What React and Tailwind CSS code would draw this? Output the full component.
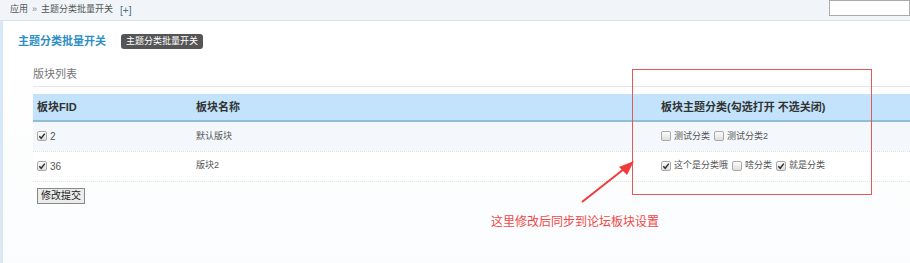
import React from "react";

const font = { fontFamily: '"Liberation Sans", "Noto Sans CJK SC", sans-serif' };

function Box({ checked }) {
  return (
    <span className="inline-flex items-center justify-center w-[10px] h-[10px] rounded-[2px] border border-[#aaa] bg-gradient-to-b from-[#fdfdfd] to-[#dedede] align-middle mr-[3px]">
      {checked && (
        <svg width="8" height="8" viewBox="0 0 8 8">
          <path d="M1.3 4.3 L3.2 6.3 L6.8 1.6" fill="none" stroke="#333" strokeWidth="1.5" />
        </svg>
      )}
    </span>
  );
}

const rows = [
  {
    fid: "2",
    name: "默认版块",
    cats: [
      ["测试分类", false],
      ["测试分类2", false],
    ],
  },
  {
    fid: "36",
    name: "版块2",
    cats: [
      ["这个是分类哦", true],
      ["啥分类", false],
      ["就是分类", true],
    ],
  },
];

export default function App() {
  return (
    <div className="relative w-[910px] h-[263px] overflow-hidden bg-white text-[#333]" style={font}>
      {/* Top nav */}
      <div className="h-[21px] flex items-center justify-between bg-[#f1f5f9] border-b border-[#dbe3ea] pl-[10px]">
        <div className="text-[9px] text-[#555] flex items-center">
          <span>应用</span>
          <span className="mx-[4px] text-[#888]">»</span>
          <span>主题分类批量开关</span>
          <span className="ml-[7px] text-[#4a6a8a] text-[10px]">[+]</span>
        </div>
        <div className="self-start w-[81px] h-[16px] border border-[#aaa] bg-white" />
      </div>

      {/* Body */}
      <div className="h-[242px] border-l-[3px] border-[#d8e8f4] bg-gradient-to-b from-white to-[#fbfcfd]">
        <div className="flex items-center pt-[13px] pl-[15px] h-[28px]">
          <span className="text-[11px] font-bold text-[#2d8fc6]">主题分类批量开关</span>
          <span className="ml-[15px] px-[5px] h-[15px] leading-[15px] rounded-[3px] bg-[#555] text-white text-[9px]">
            主题分类批量开关
          </span>
        </div>

        <div
          className="ml-[30px] mt-[18px] h-[20px] text-[11px] leading-[14px] text-[#777] border-b border-[#e6e6e6]"
          style={{ fontFamily: '"Liberation Serif", "Noto Sans CJK SC", serif' }}
        >
          版块列表
        </div>

        <table className="ml-[30px] mt-[7px] w-[877px] text-[9px] border-collapse">
          <thead>
            <tr className="bg-[#c2e3fb] border-b-2 border-[#93bcd8] h-[27px]">
              <th className="text-left text-[11px] font-bold pl-[4px] w-[163px] text-[#333]">板块FID</th>
              <th className="text-left text-[11px] font-bold w-[465px] text-[#333]">板块名称</th>
              <th className="text-left text-[11px] font-bold text-[#333]">板块主题分类(勾选打开 不选关闭)</th>
            </tr>
          </thead>
          <tbody>
            {rows.map((r, i) => (
              <tr
                key={r.fid}
                className={`h-[30px] border-b border-dotted border-[#e3e3e3] ${i === 0 ? "bg-[#f4f8fc]" : "bg-white"}`}
              >
                <td className="pl-[4px] text-[#555]">
                  <Box checked />
                  <span className="align-middle text-[10px]">{r.fid}</span>
                </td>
                <td className="text-[#555]">{r.name}</td>
                <td className="text-[#555]">
                  {r.cats.map(([c, on]) => (
                    <span key={c} className="mr-[4px] whitespace-nowrap">
                      <Box checked={on} />
                      <span className="align-middle">{c}</span>
                    </span>
                  ))}
                </td>
              </tr>
            ))}
          </tbody>
        </table>

        <button className="ml-[34px] mt-[5px] h-[16px] px-[3px] text-[10px] leading-[14px] text-[#222] bg-[#ececec] border border-[#888]">
          修改提交
        </button>
      </div>

      {/* Annotation */}
      <div className="absolute left-[632px] top-[69px] w-[240px] h-[126px] border border-[#e05a5a]" />
      <svg className="absolute left-0 top-0" width="910" height="263">
        <line x1="582" y1="202" x2="624" y2="169" stroke="#f23a3a" strokeWidth="2" />
        <polygon points="634,161 619,167 627,175" fill="#f23a3a" />
      </svg>
      <div className="absolute left-[491px] top-[213px] text-[12px] text-[#f04848]">
        这里修改后同步到论坛板块设置
      </div>
    </div>
  );
}
